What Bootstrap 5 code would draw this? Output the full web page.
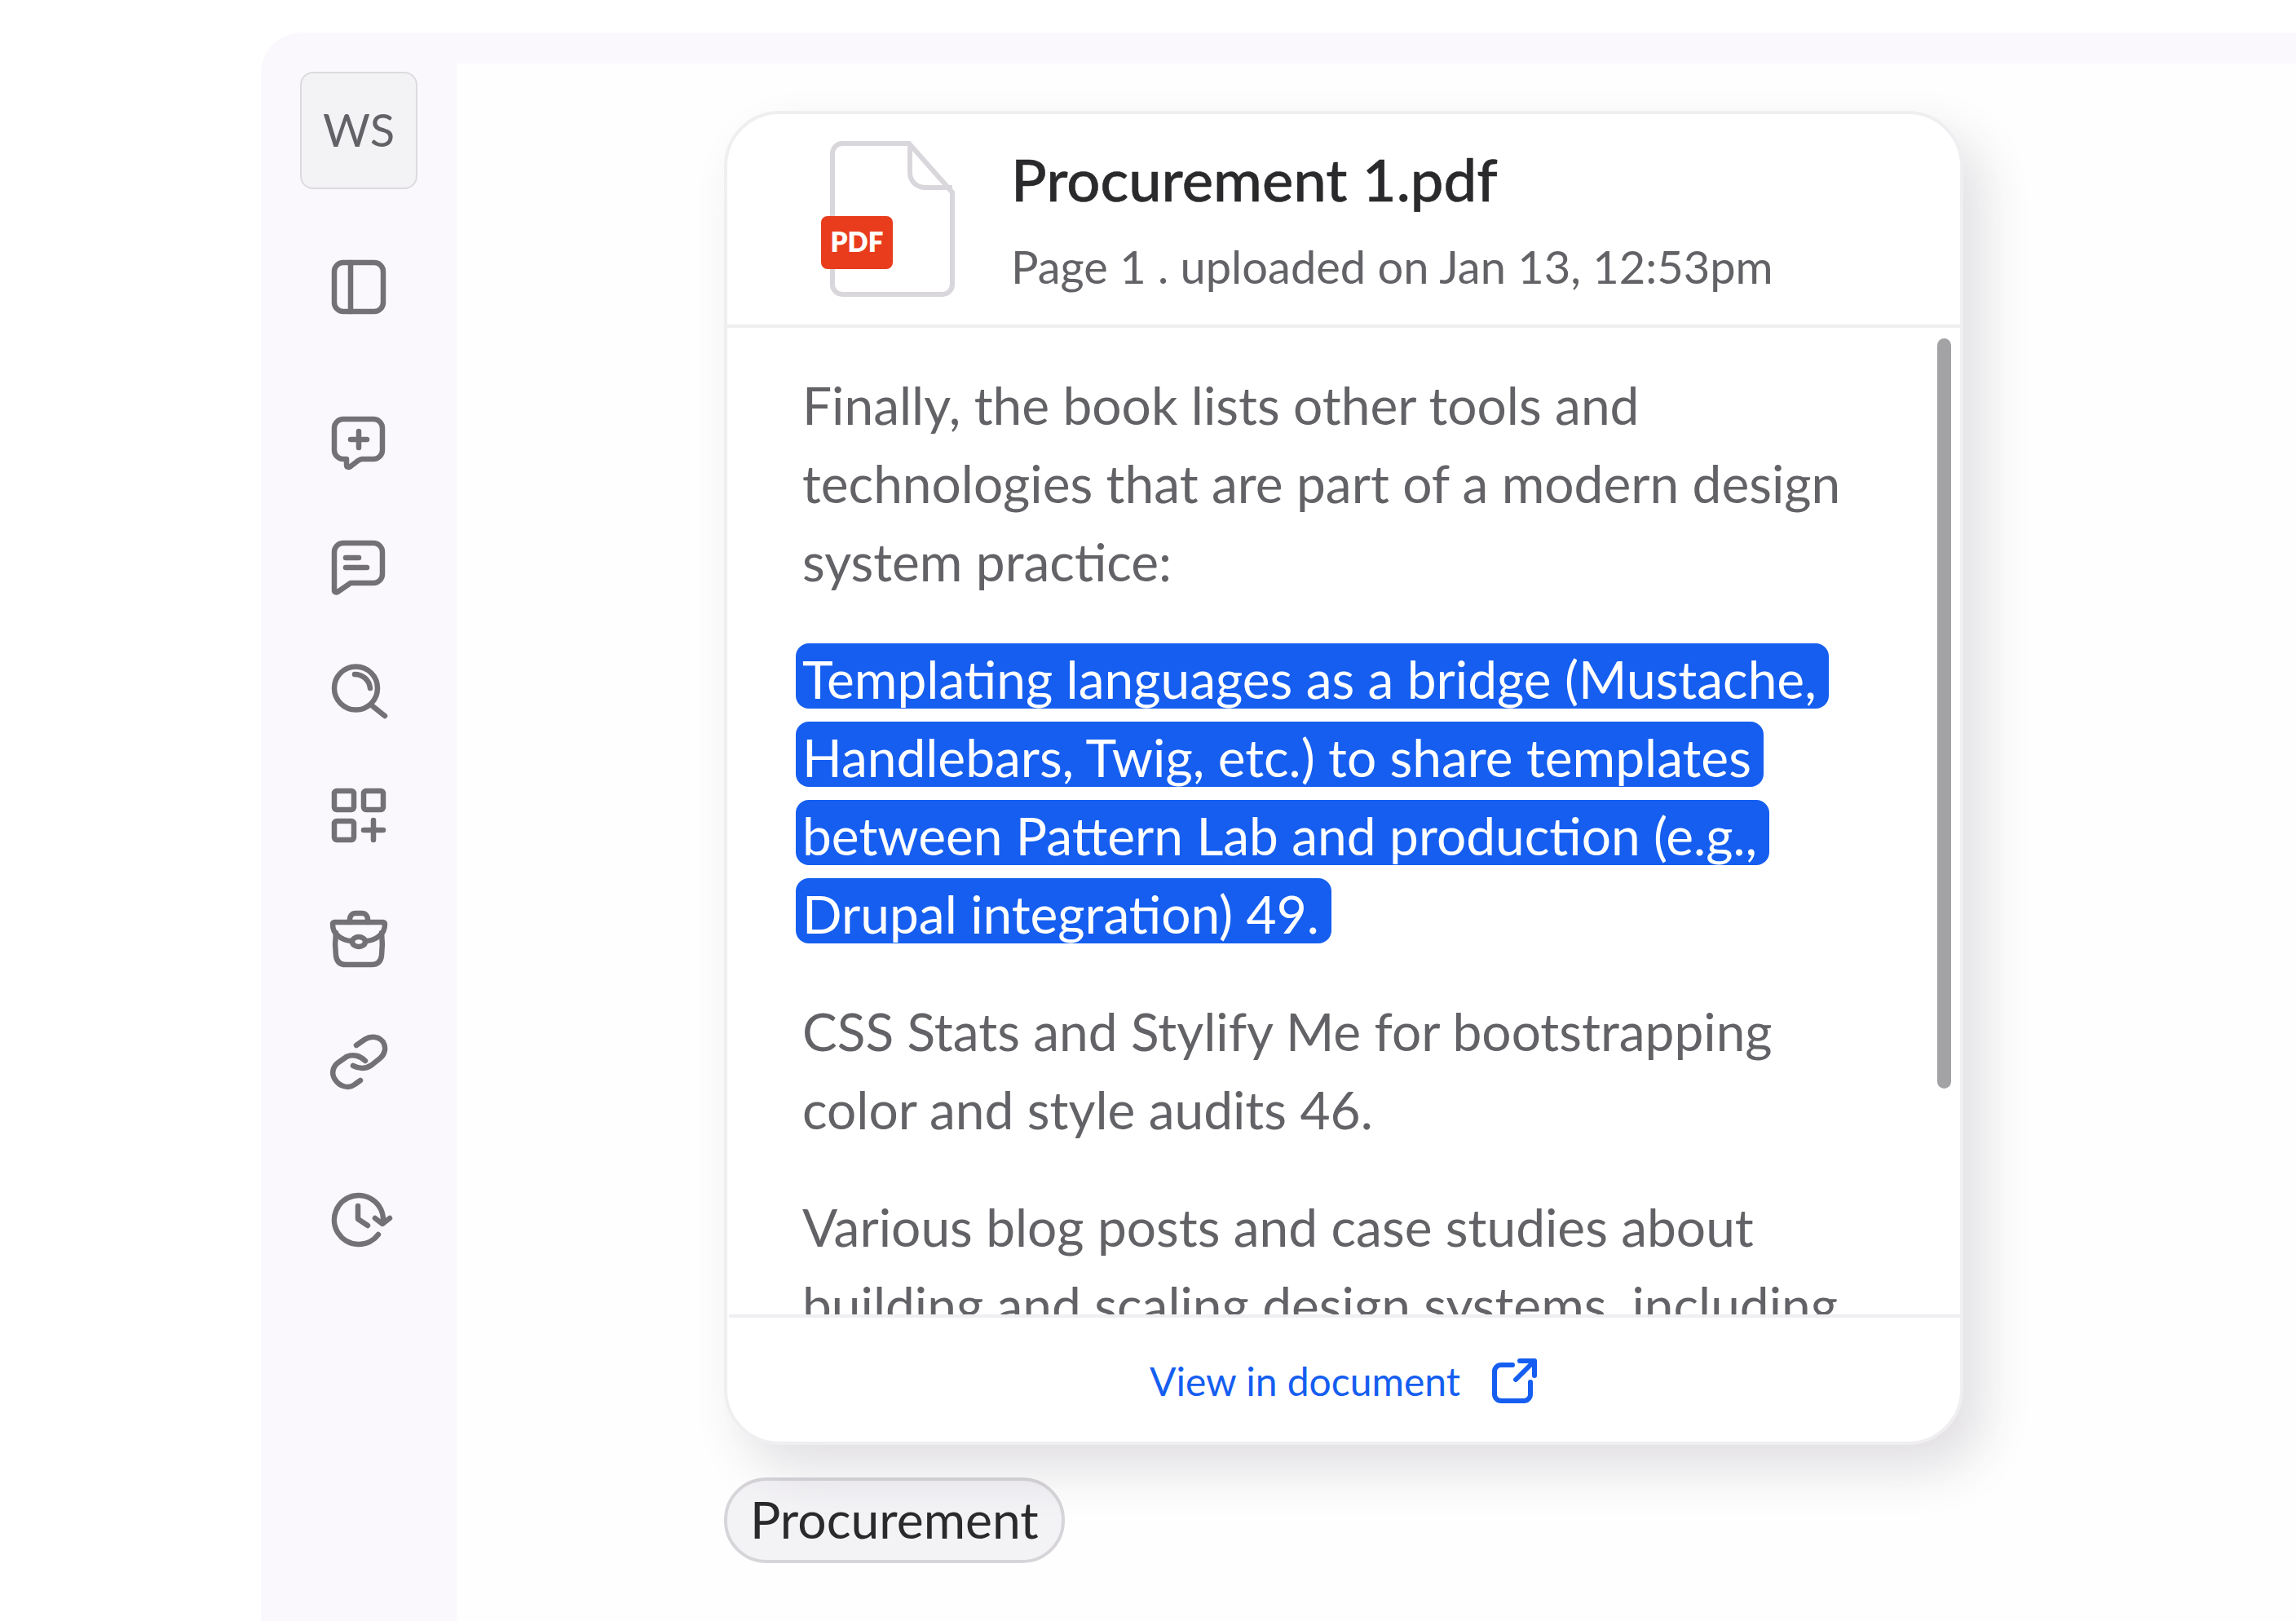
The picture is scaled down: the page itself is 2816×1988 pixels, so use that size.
<!DOCTYPE html>
<html lang="en">
<head>
  <meta charset="UTF-8" />
  <title>Source preview</title>
  <link href="https://cdn.jsdelivr.net/npm/bootstrap@5.3.3/dist/css/bootstrap.min.css" rel="stylesheet" />
  <style>
    body {
      background: #fff;
      height: 1988px;
      overflow: hidden;
      font-family: "Lato", "Liberation Sans", sans-serif;
      font-variant-ligatures: common-ligatures;
    }
    .app-shell {
      margin: 40px 0 0 320px;
      height: 1948px;
      background: #faf8fc;
      border-top-left-radius: 50px;
    }
    .side-rail {
      width: 240px;
      flex: none;
      padding-top: 48px;
    }
    .ws-box {
      width: 144px;
      height: 144px;
      background: #f3f2f5;
      border: 2px solid #dcdadd;
      border-radius: 16px;
      color: #636266;
      font-size: 56px;
      line-height: 1;
      padding-bottom: 2px;
    }
    .rail-ico {
      width: 72px;
      height: 72px;
      flex: none;
      margin-top: 80px;
      overflow: visible;
      fill: none;
      stroke: #737175;
      stroke-width: 6.5;
      stroke-linecap: round;
      stroke-linejoin: round;
    }
    .rail-ico.first-ico { margin-top: 84px; }
    .rail-ico.gap-ico { margin-top: 120px; }
    .main-area {
      margin-top: 38px;
      background: #fefefe;
      padding: 58px 0 0 328px;
    }
    .source-card {
      width: 1520px;
      height: 1636px;
      background: #fff;
      border: 4px solid #efeef0;
      border-radius: 68px;
      box-shadow: 24px 30px 60px rgba(60, 50, 70, .15);
      overflow: hidden;
    }
    .card-head {
      height: 262px;
      border-bottom: 4px solid #efeef0;
      padding-left: 115px;
      flex: none;
    }
    .file-ico {
      width: 168px;
      height: 196px;
      flex: none;
      margin: 2px 65px 0 0;
    }
    .file-name {
      font-size: 72.4px;
      line-height: 72px;
      color: #2a292c;
      margin: 0 0 44px;
      -webkit-text-stroke: .5px #2a292c;
    }
    .file-meta {
      font-size: 56px;
      line-height: 1;
      color: #636266;
      margin: 0;
    }
    .card-body-wrap {
      flex: 1;
      min-height: 0;
      padding: 47px 0 0 92px;
      overflow: hidden;
      font-size: 64px;
      line-height: 96px;
      color: #636266;
    }
    .card-body-wrap p {
      margin: 0 0 48px;
      width: 1290px;
    }
    .hl-text {
      position: relative;
      top: -3px;
      background: #155ef0;
      color: #fff;
      border-radius: 16px;
      padding: 2px 15px 1px 8px;
      margin-left: -8px;
      -webkit-box-decoration-break: clone;
      box-decoration-break: clone;
    }
    .hl-inner {
      position: relative;
      top: 3px;
    }
    .scroll-thumb {
      position: absolute;
      top: 275px;
      right: 11px;
      width: 17px;
      height: 920px;
      border-radius: 9px;
      background: #a3a2a5;
    }
    .card-foot {
      height: 156px;
      flex: none;
      border-top: 4px solid #efeef0;
      margin-left: 2px;
      padding: 3px 3px 0 0;
      gap: 38px;
      color: #155ef0;
      font-size: 48px;
      text-decoration: none;
    }
    .open-ico {
      width: 56px;
      height: 56px;
      fill: none;
      stroke: #155ef0;
      stroke-width: 6;
      stroke-linecap: round;
      stroke-linejoin: round;
    }
    .tag-pill {
      margin-top: 40px;
      height: 105px;
      padding: 0 28px 4px;
      background: #f3f2f5;
      border: 4px solid #d7d5d9;
      border-radius: 52px;
      color: #2a292c;
      font-size: 62.4px;
    }
  </style>
</head>
<body>
  <div class="app-shell d-flex">
    <!-- left rail -->
    <nav class="side-rail d-flex flex-column align-items-center">
      <div class="ws-box d-flex align-items-center justify-content-center">WS</div>
      <svg class="rail-ico first-ico" viewBox="0 0 72 72"><rect x="6" y="6" width="60" height="60" rx="11"/><path d="M26 6v60"/></svg>
      <svg class="rail-ico gap-ico" viewBox="0 0 72 72"><path d="M17 6h37a11 11 0 0 1 11 11v27a11 11 0 0 1-11 11H40c-2 0-3 1-5 2l-9 7c-3 2-5 1-5-2v-7h-4A11 11 0 0 1 6 44V17A11 11 0 0 1 17 6z"/><path d="M26 31h20M36 21v20"/></svg>
      <svg class="rail-ico" viewBox="0 0 72 72"><path d="M17 6h37a11 11 0 0 1 11 11v27a11 11 0 0 1-11 11H26l-16 11c-2 1-4 0-4-2V17A11 11 0 0 1 17 6z"/><path d="M20 24h16M20 36h26"/></svg>
      <svg class="rail-ico" viewBox="0 0 72 72"><circle cx="32.5" cy="32" r="26.5"/><path d="M31 15c10 0 18 7 19 17M53 54l15 12"/></svg>
      <svg class="rail-ico" viewBox="0 0 72 72"><rect x="6" y="6" width="24" height="23" rx="3"/><rect x="42" y="6" width="24" height="23" rx="3"/><rect x="6" y="43" width="24" height="23" rx="3"/><path d="M42 54h24M54 42v24"/></svg>
      <svg class="rail-ico" viewBox="0 0 72 72"><path d="M25 15v-3c0-5 3-8 7-8h8c4 0 7 3 7 8v3"/><path d="M6 15h60c1 0 2 1 2 2 0 6-2 11-6 14-5 5-13 7-18 7M6 15c-1 0-2 1-2 2 0 6 2 11 6 14 5 5 13 7 18 7"/><path d="M8 28c-1 8-1 20 0 28 1 7 5 11 12 11h32c7 0 11-4 12-11 1-8 1-20 0-28"/><ellipse cx="36" cy="39" rx="8" ry="6"/></svg>
      <svg class="rail-ico" viewBox="0 0 72 72"><path d="M33 14l10-7c8-5 18-4 23 3 4 7 2 15-4 20l-10 8c-7 5-15 5-23 1"/><path d="M44 33c-6-6-15-9-23-5l-10 7c-7 5-9 14-4 21 5 8 16 12 24 6l7-5"/></svg>
      <svg class="rail-ico gap-ico" viewBox="0 0 72 72"><path d="M60 54A30 30 0 1 1 65.7 40"/><path d="M35 19v16l12 8M56 34l9 7 9-7"/></svg>
    </nav>

    <main class="main-area flex-grow-1">
      <div class="source-card position-relative d-flex flex-column">
        <header class="card-head d-flex align-items-center">
          <svg class="file-ico" viewBox="0 0 168 196">
            <path d="M26 4h82l53 60v113a12 12 0 0 1-12 12H26a12 12 0 0 1-12-12V16A12 12 0 0 1 26 4z" fill="none" stroke="#d9d7db" stroke-width="6"/>
            <path d="M109 4v36a18 18 0 0 0 18 18h34" fill="none" stroke="#d9d7db" stroke-width="6"/>
            <rect x="0" y="93" width="88" height="65" rx="8" fill="#e83c1d"/>
            <text x="44" y="137" font-family="Lato, sans-serif" font-size="33" font-weight="800" fill="#fff" text-anchor="middle">PDF</text>
          </svg>
          <div>
            <h1 class="file-name fw-medium">Procurement 1.pdf</h1>
            <p class="file-meta">Page 1 . uploaded on Jan 13, 12:53pm</p>
          </div>
        </header>
        <div class="card-body-wrap">
          <p>Finally, the book lists other tools and technologies that are part of a modern design system practice:</p>
          <p><span class="hl-text"><span class="hl-inner">Templating languages as a bridge (Mustache, Handlebars, Twig, etc.) to share templates between Pattern Lab and production (e.g., Drupal integration) 49.</span></span></p>
          <p>CSS Stats and Stylify Me for bootstrapping color and style audits 46.</p>
          <p>Various blog posts and case studies about building and scaling design systems, including</p>
        </div>
        <a href="#" class="card-foot d-flex align-items-center justify-content-center">
          <span>View in document</span>
          <svg class="open-ico" viewBox="0 0 56 56"><path d="M26 8H12a8 8 0 0 0-8 8v28a8 8 0 0 0 8 8h28a8 8 0 0 0 8-8V29"/><path d="M30 26L53 3M35 3h18v18"/></svg>
        </a>
        <div class="scroll-thumb"></div>
      </div>
      <div class="tag-pill d-inline-flex align-items-center">Procurement</div>
    </main>
  </div>
</body>
</html>
